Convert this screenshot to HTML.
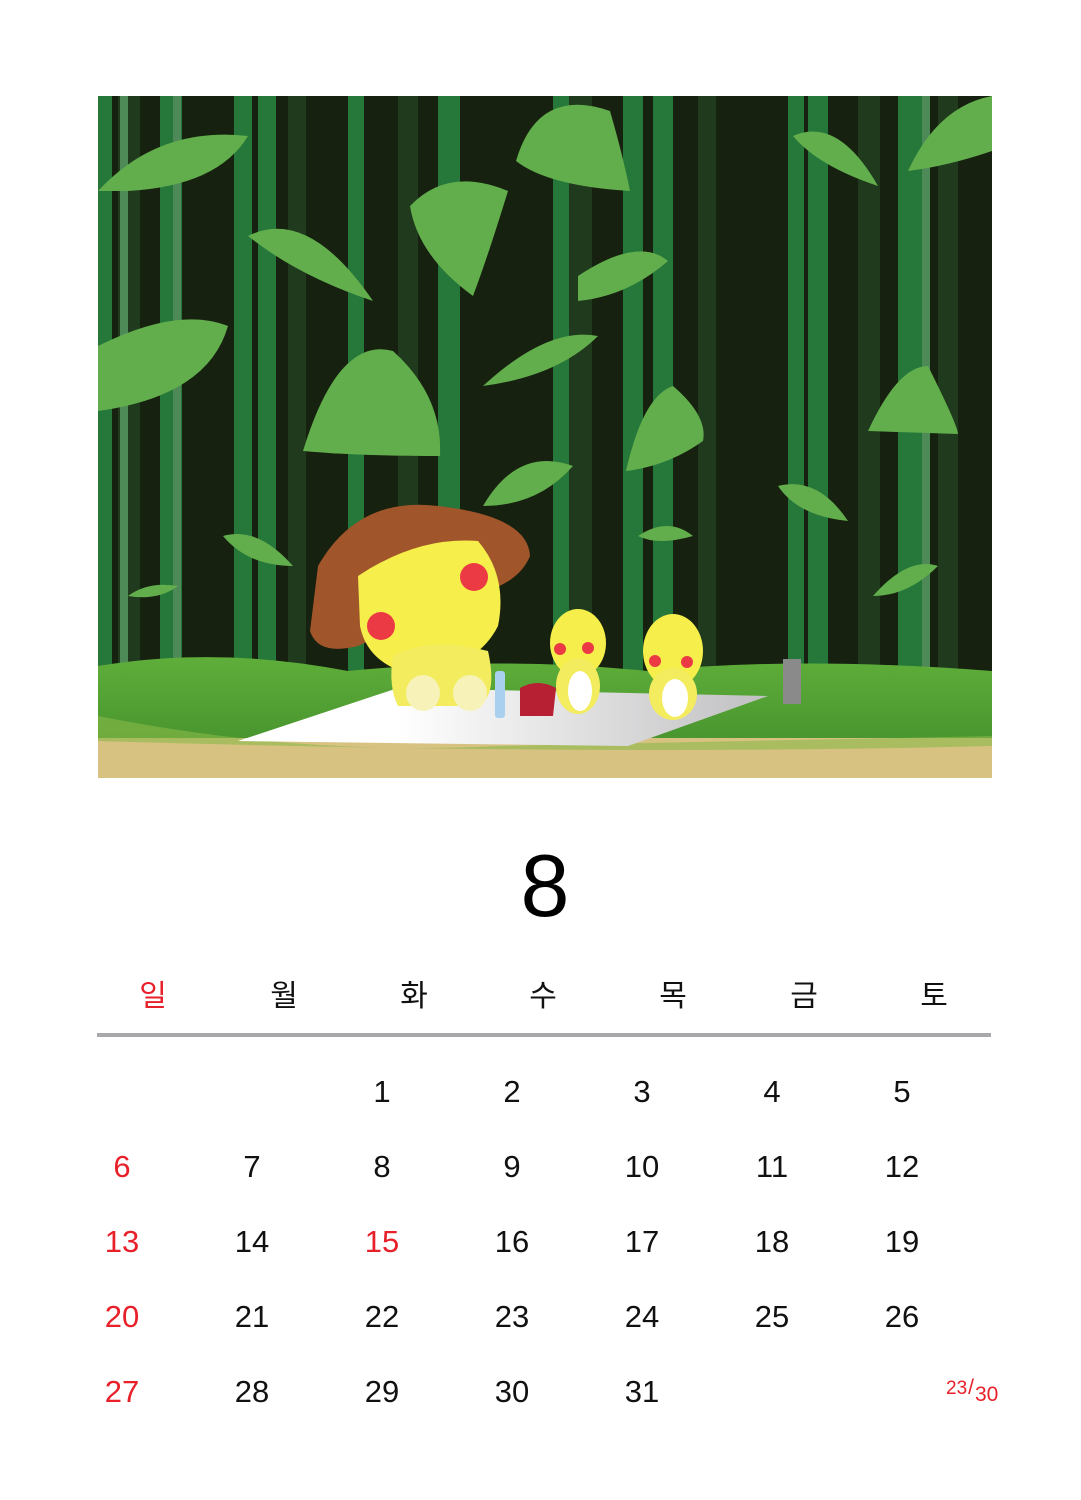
<!DOCTYPE html>
<html><head><meta charset="utf-8"><style>
html,body{margin:0;padding:0;background:#fff;width:1081px;height:1500px;overflow:hidden;position:relative;font-family:"Liberation Sans","Noto Sans CJK KR",sans-serif}
.t{position:absolute;transform:translateX(-50%);white-space:nowrap;line-height:1}
.n{font-size:31px;color:#111}
.h{font-size:30px;color:#111;font-family:"Noto Sans CJK KR","NanumGothic",sans-serif}
.r{color:#e8202a}
</style></head><body>
<svg style="position:absolute;left:98px;top:96px" width="894" height="682" viewBox="0 0 894 682">
<defs>
<linearGradient id="gr" x1="0" y1="0" x2="0" y2="1"><stop offset="0" stop-color="#5fae3a"/><stop offset="1" stop-color="#3f8a2a"/></linearGradient>
<linearGradient id="cl" x1="0" y1="0" x2="1" y2="0"><stop offset="0.3" stop-color="#fff"/><stop offset="1" stop-color="#c0c0c2"/></linearGradient>
</defs>
<rect width="894" height="682" fill="#16210f"/>
<g fill="#1f3a1c">
<rect x="20" y="0" width="22" height="600"/><rect x="190" y="0" width="18" height="600"/><rect x="300" y="0" width="20" height="600"/><rect x="470" y="0" width="24" height="600"/><rect x="600" y="0" width="18" height="600"/><rect x="760" y="0" width="22" height="600"/><rect x="840" y="0" width="20" height="600"/>
</g>
<g fill="#25773a">
<rect x="0" y="0" width="14" height="620"/><rect x="62" y="0" width="22" height="620"/><rect x="136" y="0" width="18" height="620"/><rect x="160" y="0" width="18" height="620"/><rect x="250" y="0" width="16" height="620"/><rect x="340" y="0" width="22" height="620"/><rect x="455" y="0" width="16" height="620"/><rect x="525" y="0" width="20" height="620"/><rect x="555" y="0" width="20" height="620"/><rect x="690" y="0" width="16" height="620"/><rect x="710" y="0" width="20" height="620"/><rect x="800" y="0" width="16" height="620"/><rect x="812" y="0" width="14" height="620"/>
</g>
<g fill="#4e8a58"><rect x="22" y="0" width="8" height="620"/><rect x="75" y="0" width="8" height="620"/><rect x="824" y="0" width="8" height="620"/></g>
<g fill="#62ad4c">
<path d="M0 95 Q60 30 150 40 Q120 90 30 95Z"/><path d="M150 140 Q210 110 275 205 Q200 180 150 140Z"/>
<path d="M0 250 Q80 210 130 230 Q110 300 0 315Z"/><path d="M205 355 Q240 240 295 255 Q345 300 342 360 Q260 360 205 355Z"/>
<path d="M312 110 Q350 70 410 95 Q390 160 375 200 Q320 160 312 110Z"/><path d="M418 65 Q440 -10 512 15 Q525 60 532 95 Q450 90 418 65Z"/>
<path d="M480 180 Q540 140 570 165 Q530 200 480 205Z"/><path d="M385 290 Q450 230 500 240 Q460 280 385 290Z"/>
<path d="M528 375 Q545 300 575 290 Q610 320 605 345 Q570 370 528 375Z"/><path d="M695 40 Q740 20 780 90 Q720 70 695 40Z"/>
<path d="M810 75 Q840 10 894 0 L894 55 Q850 70 810 75Z"/><path d="M770 335 Q800 270 830 270 Q860 330 860 338Z"/>
<path d="M385 410 Q420 350 475 370 Q440 410 385 410Z"/><path d="M680 390 Q720 380 750 425 Q700 420 680 390Z"/>
<path d="M125 440 Q160 430 195 470 Q150 470 125 440Z"/><path d="M540 440 Q570 420 595 440 Q560 450 540 440Z"/>
<path d="M30 500 Q50 485 80 490 Q60 505 30 500Z"/><path d="M775 500 Q810 460 840 470 Q810 500 775 500Z"/>
</g>
<path d="M0 570 Q120 550 250 575 Q400 560 550 575 Q700 560 894 575 L894 682 L0 682Z" fill="url(#gr)"/>
<rect x="0" y="642" width="894" height="40" fill="#d8c282"/>
<path d="M0 620 Q200 660 400 650 L894 640 L894 650 Q500 660 0 645Z" fill="#8ab94a" opacity=".6"/>
<polygon points="140,645 300,592 670,600 530,650" fill="url(#cl)"/>
<path d="M220 470 Q260 400 340 410 Q430 420 432 460 Q420 490 370 500 L260 550 Q220 560 212 535Z" fill="#a0552a"/>
<path d="M260 480 Q320 440 380 445 Q410 480 400 530 Q380 570 320 580 Q270 570 262 530Z" fill="#f6ee4a"/>
<path d="M295 560 Q330 540 390 555 Q400 600 380 610 L300 610 Q290 590 295 560Z" fill="#f3ec5e"/>
<circle cx="376" cy="481" r="14" fill="#ec3a45"/><circle cx="283" cy="530" r="14" fill="#ec3a45"/>
<ellipse cx="325" cy="597" rx="17" ry="18" fill="#f7f3b8"/><ellipse cx="372" cy="597" rx="17" ry="18" fill="#f7f3b8"/>
<rect x="397" y="575" width="10" height="47" rx="3" fill="#a9d0ef"/>
<path d="M422 592 Q440 582 458 592 L455 620 L422 620Z" fill="#b71f33"/>
<ellipse cx="480" cy="547" rx="28" ry="34" fill="#f6ee4a"/><ellipse cx="480" cy="590" rx="22" ry="28" fill="#f3ec5e"/><ellipse cx="482" cy="595" rx="12" ry="20" fill="#fff"/>
<ellipse cx="575" cy="555" rx="30" ry="37" fill="#f6ee4a"/><ellipse cx="575" cy="598" rx="24" ry="26" fill="#f3ec5e"/><ellipse cx="577" cy="602" rx="13" ry="19" fill="#fff"/>
<circle cx="462" cy="553" r="6" fill="#ec3a45"/><circle cx="490" cy="552" r="6" fill="#ec3a45"/><circle cx="557" cy="565" r="6" fill="#ec3a45"/><circle cx="589" cy="566" r="6" fill="#ec3a45"/>
<rect x="685" y="563" width="18" height="45" fill="#8a8a8a"/>
</svg>
<div class="t" style="left:545px;top:842px;font-size:88px;color:#000">8</div>
<div class="t h r" style="left:153px;top:978px">일</div>
<div class="t h" style="left:284px;top:978px">월</div>
<div class="t h" style="left:414px;top:978px">화</div>
<div class="t h" style="left:543px;top:978px">수</div>
<div class="t h" style="left:673px;top:978px">목</div>
<div class="t h" style="left:804px;top:978px">금</div>
<div class="t h" style="left:934px;top:978px">토</div>
<div style="position:absolute;left:97px;top:1033px;width:894px;height:4px;background:#a8a8ac"></div>
<div class="t n" style="left:382px;top:1076px">1</div><div class="t n" style="left:512px;top:1076px">2</div><div class="t n" style="left:642px;top:1076px">3</div><div class="t n" style="left:772px;top:1076px">4</div><div class="t n" style="left:902px;top:1076px">5</div>
<div class="t n r" style="left:122px;top:1151px">6</div><div class="t n" style="left:252px;top:1151px">7</div><div class="t n" style="left:382px;top:1151px">8</div><div class="t n" style="left:512px;top:1151px">9</div><div class="t n" style="left:642px;top:1151px">10</div><div class="t n" style="left:772px;top:1151px">11</div><div class="t n" style="left:902px;top:1151px">12</div>
<div class="t n r" style="left:122px;top:1226px">13</div><div class="t n" style="left:252px;top:1226px">14</div><div class="t n r" style="left:382px;top:1226px">15</div><div class="t n" style="left:512px;top:1226px">16</div><div class="t n" style="left:642px;top:1226px">17</div><div class="t n" style="left:772px;top:1226px">18</div><div class="t n" style="left:902px;top:1226px">19</div>
<div class="t n r" style="left:122px;top:1301px">20</div><div class="t n" style="left:252px;top:1301px">21</div><div class="t n" style="left:382px;top:1301px">22</div><div class="t n" style="left:512px;top:1301px">23</div><div class="t n" style="left:642px;top:1301px">24</div><div class="t n" style="left:772px;top:1301px">25</div><div class="t n" style="left:902px;top:1301px">26</div>
<div class="t n r" style="left:122px;top:1376px">27</div><div class="t n" style="left:252px;top:1376px">28</div><div class="t n" style="left:382px;top:1376px">29</div><div class="t n" style="left:512px;top:1376px">30</div><div class="t n" style="left:642px;top:1376px">31</div>
<div style="position:absolute;left:946px;top:1376px;color:#e8202a;font-size:19px;white-space:nowrap">23<span style="font-size:21px;margin:0 1px">/</span><span style="position:relative;top:7px;font-size:21px">30</span></div>
</body></html>
